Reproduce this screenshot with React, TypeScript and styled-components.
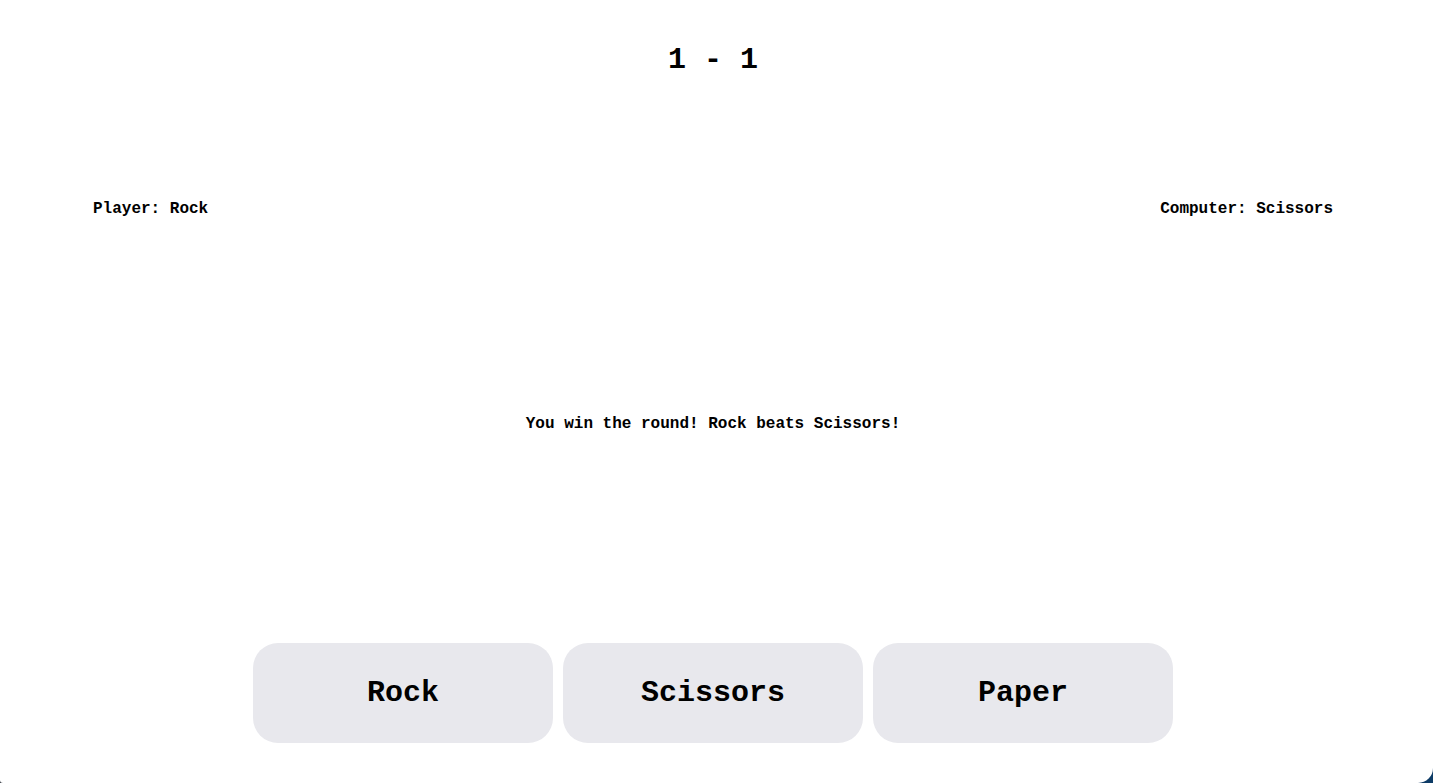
import React from "react";
import styled, { createGlobalStyle } from "styled-components";

const GlobalStyle = createGlobalStyle`
  html, body {
    margin: 0;
    padding: 0;
    height: 100%;
  }
  body {
    background: linear-gradient(90deg, #3a3f47 0%, #0d3b66 100%);
    font-family: "Liberation Mono", "Courier New", monospace;
    overflow: hidden;
  }
`;

const Page = styled.div`
  box-sizing: border-box;
  height: 783px;
  background: #ffffff;
  border-radius: 0 0 15px 3px;
  display: flex;
  flex-direction: column;
  align-items: stretch;
  padding: 42px 7px 40px 0;
  font-family: "Liberation Mono", "Courier New", monospace;
  font-weight: 700;
  color: #000;
`;

const Score = styled.h1`
  margin: 0;
  font-size: 30px;
  line-height: 36px;
  text-align: center;
  font-weight: 700;
`;

const Players = styled.div`
  margin-top: 122px;
  padding: 0 93px;
  display: flex;
  justify-content: space-between;
  font-size: 16px;
  line-height: 18px;
`;

const Message = styled.p`
  margin: 197px 0 0;
  font-size: 16px;
  line-height: 18px;
  text-align: center;
`;

const Buttons = styled.div`
  margin-top: auto;
  display: flex;
  justify-content: center;
  gap: 10px;
`;

const ChoiceButton = styled.button`
  width: 300px;
  height: 100px;
  border: none;
  border-radius: 25px;
  background: #e8e8ed;
  font-family: "Liberation Mono", "Courier New", monospace;
  font-weight: 700;
  font-size: 30px;
  color: #000;
  cursor: pointer;
  padding: 0;
`;

export default function App() {
  return (
    <>
      <GlobalStyle />
      <Page>
        <Score>1 - 1</Score>
        <Players>
          <span>Player: Rock</span>
          <span>Computer: Scissors</span>
        </Players>
        <Message>You win the round! Rock beats Scissors!</Message>
        <Buttons>
          <ChoiceButton>Rock</ChoiceButton>
          <ChoiceButton>Scissors</ChoiceButton>
          <ChoiceButton>Paper</ChoiceButton>
        </Buttons>
      </Page>
    </>
  );
}
